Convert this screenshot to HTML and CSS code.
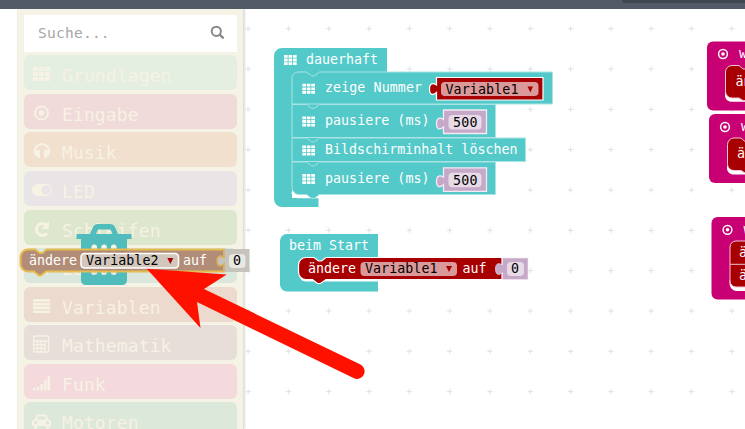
FILE: index.html
```
<!DOCTYPE html>
<html lang="de">
<head>
<meta charset="utf-8">
<title>Blockeditor</title>
<link rel="stylesheet" href="styles.css">
</head>
<body>
<div class="editor">
  <header class="topbar"><span class="topbar-tab"></span></header>
  <main class="main">
    <aside class="toolbox">
      <div class="search"><span>Suche...</span>
        <svg width="16" height="16" viewBox="0 0 16 16"><circle cx="6.3" cy="6.3" r="4.6" fill="none" stroke="#888" stroke-width="2"/><path d="M9.7 9.7L13.6 13.4" stroke="#888" stroke-width="2.3"/></svg>
      </div>
      <div class="row green"><svg viewBox="0 0 20 20"><path d="M1 3h5v4H1zM7 3h5v4H7zM13 3h5v4h-5zM1 8h5v4H1zM7 8h5v4H7zM13 8h5v4h-5zM1 13h5v4H1zM7 13h5v4H7zM13 13h5v4h-5z"/></svg><span>Grundlagen</span></div>
      <div class="row pink"><svg viewBox="0 0 20 20"><circle cx="9.5" cy="10" r="6.500" class="line"/><circle cx="9.5" cy="10" r="2.800"/></svg><span>Eingabe</span></div>
      <div class="row orange"><svg viewBox="0 0 20 20"><path class="line" d="M3.500 14C1.500 8 4.500 3.300 10 3.300S18.500 8 16.500 14"/><path d="M5 9h3v8H6.500L3 14v-3zM15 9h-3v8h1.500L17 14v-3z"/></svg><span>Musik</span></div>
      <div class="row lilac"><svg viewBox="0 0 20 20"><path fill-rule="evenodd" d="M6 4h8a6 6 0 0 1 0 12H6A6 6 0 0 1 6 4zM14 5.300a4.700 4.700 0 1 0 .1 0z"/></svg><span>LED</span></div>
      <div class="row lime"><svg viewBox="0 0 20 20"><path class="line wide" d="M15 14.500A6 6 0 1 1 14.500 6"/><path d="M17 2v8H9z"/></svg><span>Schleifen</span></div>
      <div class="row mint"><svg viewBox="0 0 20 20"><path class="line" d="M1 6h3c5 0 5 8 10 8h3M1 14h3c5 0 5-8 10-8h3"/><path d="M14 2l5 4-5 4zM14 10l5 4-5 4z"/></svg><span>Logik</span></div>
      <div class="row peach"><svg viewBox="0 0 20 20"><path d="M1 3h17v2.700H1zM1 6.800h17v2.700H1zM1 10.600h17v2.700H1zM1 14.400h17v2.700H1z"/></svg><span>Variablen</span></div>
      <div class="row mauve"><svg viewBox="0 0 20 20"><rect x="1.700" y="2" width="15" height="16" rx="1" class="line thin"/><path class="line thin" d="M2 7h15M2 10.700h12M2 14.400h12M5.500 7v11M9.300 7v11M13 7v11"/></svg><span>Mathematik</span></div>
      <div class="row rose"><svg viewBox="0 0 20 20"><path d="M1 15h2.500v2.500H1zM4.700 13.500h2.500v4H4.700zM8.400 11h2.500v6.500H8.400zM12 7.500h2.500v10H12zM15.500 3H18v14.500h-2.500z"/></svg><span>Funk</span></div>
      <div class="row sage"><svg viewBox="0 0 20 20"><path fill-rule="evenodd" d="M4.500 3.500h10l1.700 5c2 0 3 1.500 3 3V15h-2v3h-3v-3H5v3H2v-3H0v-3.500c0-2 1-3 3-3zM6 5.500l-1 3h9l-1-3zM3.700 10a1.700 1.700 0 1 0 .1 0zM15.500 10a1.700 1.700 0 1 0 .1 0z"/></svg><span>Motoren</span></div>
    </aside>
  </main>

  <svg class="canvas" width="745" height="420" viewBox="0 9 745 420">
    <defs>
      <pattern id="cross" x="227.900" y="8.500" width="40.300" height="40.330" patternUnits="userSpaceOnUse"><path d="M17.600 20.200h5.400M20.300 17.400v5.400" stroke="#e0e0e0" stroke-width="1"/></pattern>
      <pattern id="mesh" width="7" height="7" patternUnits="userSpaceOnUse"><path d="M0 0l7 7M7 0L0 7" stroke="#b89058" stroke-width=".8"/></pattern>
      <path id="cells" fill="#fff" d="M0 0h3.700v2.800H0zM4.500 0h3.700v2.800H4.500zM9 0h3.700v2.800H9zM0 3.600h3.700v2.800H0zM4.500 3.600h3.700v2.800H4.500zM9 3.600h3.700v2.800H9zM0 7.200h3.700V10H0zM4.500 7.200h3.700V10H4.500zM9 7.200h3.700V10H9z"/>
      <g id="target"><circle r="4.400" fill="none" stroke="#fff" stroke-width="1.500"/><circle r="1.800" fill="#fff"/></g>
      <g id="num500"><path class="value" d="M0 .5h43v23.500H0v-6.500c-3 3-7 3-7-3.500s4-6 7-4z"/><rect x="5" y="5.500" width="33" height="14.500" rx="4" fill="#e8dbe8"/><text class="dark" x="9.500" y="17.300" textLength="24.500">500</text></g>
    </defs>

    <rect x="245" y="9" width="500" height="420" fill="url(#cross)"/>

    <!-- dauerhaft -->
    <path fill="#54c9c9" d="M282 48H387V72H330V190H292V198H318.500V207H282a8 8 0 0 1-8-8V56a8 8 0 0 1 8-8z"/>
    <path fill="#fff" d="M291.500 188v2.500c0 5 3 7.800 8 7.800h19V194h-27z"/>
    <g class="stmt">
      <path d="M298 72h8.500l5 3.800h3l5-3.800H552.500V104H292V78a6 6 0 0 1 6-6z"/>
      <path d="M292 104.500h14.500l5 3.800h3l5-3.800H495.500V137.500H292z"/>
      <path d="M292 138h14.500l5 3.800h3l5-3.800H525.500V161.500H292z"/>
      <path d="M292 162h14.500l5 3.800h3l5-3.800H495.500V194.500H319.500l-5 3.800h-3l-5-3.800H299a7 7 0 0 1-7-7z"/>
    </g>
    <use href="#cells" x="284" y="55"/><text class="lbl" x="306" y="64" textLength="72">dauerhaft</text>
    <use href="#cells" x="302.300" y="83.800"/><text class="lbl" x="325" y="92.300" textLength="97">zeige Nummer</text>
    <use href="#cells" x="302.300" y="116.500"/><text class="lbl" x="325" y="125.300" textLength="104.500">pausiere (ms)</text>
    <use href="#cells" x="302.300" y="145.500"/><text class="lbl" x="325" y="154.300" textLength="192.500">Bildschirminhalt löschen</text>
    <use href="#cells" x="302.300" y="174"/><text class="lbl" x="325" y="183.300" textLength="104.500">pausiere (ms)</text>
    <path class="red" d="M436.500 77.500H543V100H436.500V92.500c-3 3-7 3-7-3.500s4-6 7-4z"/>
    <rect x="441" y="82" width="97.500" height="14" rx="4" fill="#db9999"/><text class="dark" x="445.500" y="93.500" textLength="73">Variable1</text><path fill="#a80000" d="M527.500 86.500h5.500l-2.700 6z"/>
    <use href="#num500" x="443.500" y="109.500"/><use href="#num500" x="443.500" y="167.300"/>

    <!-- beim Start -->
    <path fill="#54c9c9" d="M287 234H378V291.500H287a7 7 0 0 1-7-7V241a7 7 0 0 1 7-7z"/>
    <text class="lbl" x="289" y="250" textLength="80">beim Start</text>
    <path d="M299 270v4c0 4 3 7.500 7 7.500H378V278z" fill="#fff"/>
    <path class="red" d="M306 257.500h8l4.500 3.500h3l4.500-3.500H502V279.500H326l-5.500 4h-3l-5-4H306a7.500 7.500 0 0 1-7.500-7.500V265a7.500 7.500 0 0 1 7.500-7.500z"/>
    <text class="lbl" x="308" y="273" textLength="48">ändere</text>
    <rect x="360.500" y="262" width="96.500" height="14" rx="4" fill="#db9999"/><text class="dark" x="365" y="273.300" textLength="72.500">Variable1</text><path fill="#a80000" d="M446 266h6l-3 6z"/>
    <text class="lbl" x="462.500" y="273" textLength="24">auf</text>
    <path class="value small" d="M502.500 258H528V279.500H502.500V272.500c-3 3-7 3-7-3.500s4-6 7-4z"/><rect x="507" y="262" width="17" height="14" rx="4" fill="#e8dbe8"/><text class="dark" x="511" y="273.300">0</text>

    <!-- wenn -->
    <g fill="#c80074"><rect x="707" y="41.500" width="60" height="69" rx="6"/><rect x="709" y="114" width="60" height="69" rx="6"/><rect x="711.500" y="217" width="60" height="82.500" rx="6"/></g>
    <g fill="#fff"><path d="M725 92v3c0 4 3 6.800 7 6.800h16V92zM727 165v3c0 4 3 6.500 7 6.500h16V165zM729.500 280v3c0 4 3 8 7 8h16V280z"/></g>
    <g class="red pinkline"><path d="M732 65.500h7l4 3.500h8V100.500h-8l-4-2.500h-7a6.500 6.500 0 0 1-6.500-6V72a6.500 6.500 0 0 1 6.500-6.500z"/><path d="M734 138h7l4 3.500h8V173h-8l-4-2.500h-7a6.500 6.500 0 0 1-6.500-6v-20a6.500 6.500 0 0 1 6.500-6.500z"/><path d="M736 241h16V287H736a6 6 0 0 1-6-6v-34a6 6 0 0 1 6-6zM730 264.300h16"/></g>
    <use href="#target" x="723" y="54"/><use href="#target" x="725" y="127"/><use href="#target" x="727.500" y="229.800"/>
    <text class="lbl" x="739" y="57.500">w</text><text class="lbl" x="741" y="130.500">w</text><text class="lbl" x="743.500" y="233.500">w</text>
    <text class="lbl" x="735.500" y="86">än</text><text class="lbl" x="737" y="158">än</text><text class="lbl" x="739" y="257">ä</text><text class="lbl" x="739" y="280">ä</text>

    <!-- Papierkorb -->
    <path fill="#50bcbc" fill-rule="evenodd" d="M77 234h13l3-7c1-2 3-3 5-3h12c2 0 4 1 5 3l3 7h13.500v5H127v41c0 3-2 5-5 5H86c-3 0-5-2-5-5v-41h-4.500v-4.500zM96 234h16.500l-2-4.500H98zM91.500 246v28q2.700 2 5.500 0V246q-2.700-3.500-5.500 0zM101.300 246v28q2.700 2 5.500 0V246q-2.700-3.500-5.500 0zM111 246v28q2.700 2 5.500 0V246q-2.700-3.500-5.500 0z"/>

    <!-- gezogener Block -->
    <g id="dragged">
      <path d="M28 249.500h7.500l4 3.500h3l4-3.500H224V271.500H46l-5 4h-2l-5-4H28a7.500 7.500 0 0 1-7.500-7.500V257a7.500 7.500 0 0 1 7.500-7.500z" fill="#ac8478" fill-opacity=".93"/>
      <path d="M28 249.500h7.500l4 3.500h3l4-3.500H224V271.500H46l-5 4h-2l-5-4H28a7.500 7.500 0 0 1-7.500-7.500V257a7.500 7.500 0 0 1 7.500-7.500z" fill="url(#mesh)" stroke="#e6bc50" stroke-width="2"/>
      <path d="M224 249h25.500V272H224V264c-3 3-7 2-7-3.500s4-6 7-3.500z" fill="#c6c3bd"/><path d="M224 249.500v8c-3-2-7-2-7 3.500s4 6 7 3v7.500" fill="none" stroke="#d9ae55" stroke-width="1.500"/>
      <rect x="229" y="254" width="16.500" height="14" rx="4" fill="#e9e7e1"/><text class="dark" x="233" y="265.300">0</text>
      <rect x="81" y="253.500" width="97.500" height="14.500" rx="3.500" fill="#d2c7bd" stroke="#fff" stroke-width="1.500"/><text class="dark" x="86" y="265.300" textLength="72.500">Variable2</text><path fill="#a80000" d="M167.300 258h6l-3 6z"/>
      <text class="lbl" x="29" y="265" textLength="48">ändere</text><text class="lbl" x="183" y="265" textLength="24">auf</text>
    </g>

    <!-- Pfeil -->
    <path fill="#ff1100" d="M146.700 268.800L226.700 274.500L204 289L360 364.300A7.500 7.500 0 0 1 354 378.300L197 302L200.500 328z"/>
  </svg>
</div>
</body>
</html>
```
FILE: styles.css
```
* { box-sizing: border-box; }
body { margin: 0; background: #fff; font-family: "DejaVu Sans Mono", monospace; }
.editor { position: relative; width: 745px; height: 429px; overflow: hidden; display: flex; flex-direction: column; }
.topbar { height: 9px; flex: none; display: flex; justify-content: flex-end; background: #525a68; }
.topbar-tab { width: 123px; height: 3px; background: #40464e; border-radius: 0 0 0 4px; }
.main { flex: 1; min-height: 0; padding-left: 17px; display: flex; overflow: hidden; }
.toolbox { width: 227px; padding: 6px 6px 0; display: flex; flex-direction: column; gap: 3.55px; background: #f5f3e5; border-right: 1px solid #e0dfd6; border-left: 1px solid #eef0e8; box-shadow: 1px 0 2px #ddd; overflow: hidden; }
.search { flex: none; height: 36.8px; padding: 0 11px 0 14px; display: flex; align-items: center; justify-content: space-between; background: #fff; color: #a6a6a6; font-size: 14.5px; letter-spacing: .25px; }
.row { flex: none; height: 35px; border-radius: 6px; padding: 7px 0 0 8px; display: flex; align-items: center; gap: 10px; color: #f6f2e4; font-size: 18px; letter-spacing: .12px; line-height: 22px; }
.row svg { width: 20px; height: 20px; fill: #f6f2e4; margin-top: -4px; flex: none; }
.row .line { fill: none; stroke: #f6f2e4; stroke-width: 2; }
.row .thin { stroke-width: 1.3; }
.row .wide { stroke-width: 3; }
.green { background: #e4efe1; }
.pink { background: #f1dada; }
.orange { background: #f2e0ce; }
.lilac { background: #e9e5e7; }
.lime { background: #dde7ce; }
.mint { background: #dbe7dc; }
.peach { background: #eddace; }
.mauve { background: #e7deda; }
.rose { background: #f4d9dd; }
.sage { background: #dce8da; }
.canvas { position: absolute; left: 0; top: 9px; font-size: 13.3px; }
.stmt path { fill: #54c9c9; stroke: #a9e3e3; stroke-width: 1; }
.lbl { fill: #fff; }
.dark { fill: #000; }
.red { fill: #a80000; stroke: #fff; stroke-width: 1.2; }
.pinkline { stroke: #f0c4d4; stroke-width: 1; }
.value { fill: #c6a8c8; stroke: #f3eaf4; stroke-width: 1.3; }
.small { stroke-width: .6; }
```
